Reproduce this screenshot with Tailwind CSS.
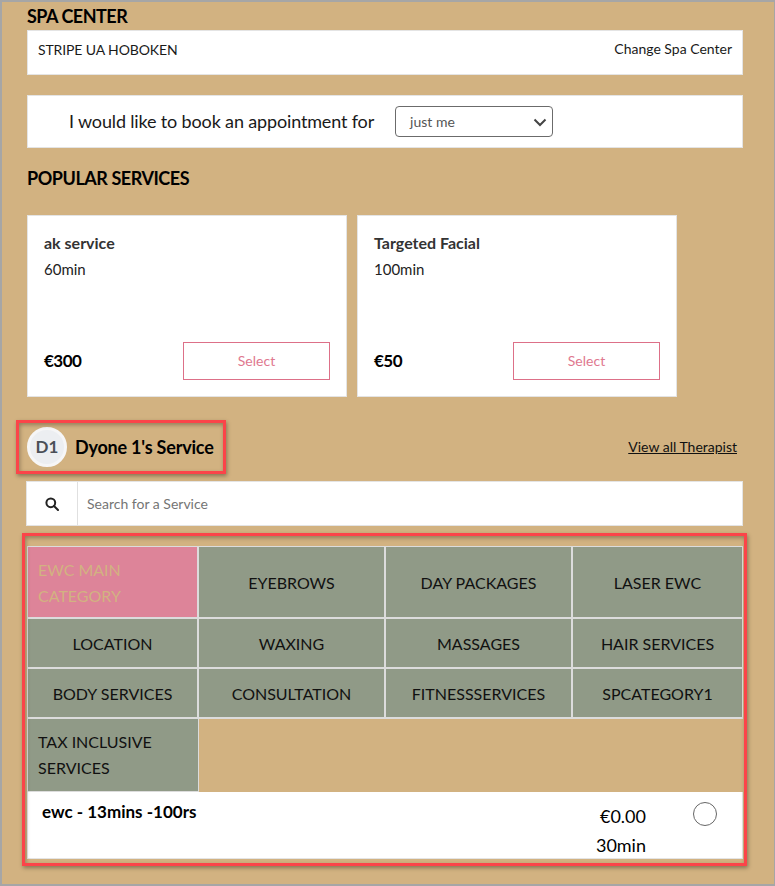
<!doctype html>
<html lang="en">
<head>
    <title>Book a Service</title>
    <meta charset="UTF-8">
    <meta name="viewport" content="width=device-width, initial-scale=1.0">
    <script src="https://cdn.jsdelivr.net/npm/@tailwindcss/browser@4"></script>
</head>
<body class="font-['Lato',sans-serif] text-black">
<main class="relative w-[775px] h-[886px] overflow-hidden bg-[#d2b281] border-t-2 border-b-2 border-l-2 border-r border-[#a6a6a6] pl-[25px]">

    <!-- Spa center -->
    <h2 class="h-[28px] pt-[4px] text-[18px] leading-[20px] font-bold tracking-[-0.5px]">SPA CENTER</h2>
    <div class="w-[716px] h-[45px] flex justify-between bg-white border border-[#e4e4e4] pl-[10px] pr-[10px] pt-[9px] text-[14px] leading-[18px] text-[#1a1a1a]">
        <span class="mt-px tracking-[-0.12px]">STRIPE UA HOBOKEN</span>
        <span>Change Spa Center</span>
    </div>

    <!-- Book for -->
    <div class="w-[716px] h-[53px] mt-[20px] flex items-center bg-white border border-[#e4e4e4] pl-[41px]">
        <span class="text-[18px] tracking-[-0.15px] text-[#1a1a1a]">I would like to book an appointment for</span>
        <div class="ml-[21px] w-[158px] h-[31px] flex items-center justify-between border border-[#6b6b6b] rounded-[4px] pl-[14px] pr-[5px] text-[14px] text-[#555]">
            <span>just me</span>
            <svg width="14" height="14" viewBox="0 0 14 14" fill="none" stroke="#444" stroke-width="2"><path d="M1.5 4.5 7 10l5.5-5.5"/></svg>
        </div>
    </div>

    <!-- Popular services -->
    <h2 class="mt-[20px] h-[20px] text-[18px] leading-[20px] font-bold tracking-[-0.45px]">POPULAR SERVICES</h2>
    <div class="mt-[27px] flex gap-[10px]">
        <div class="w-[320px] h-[182px] flex flex-col bg-white border border-[#e4e4e4] pl-[16px] pr-[16px] pt-[17px]">
            <div class="text-[16px] leading-[20px] font-bold text-[#333]">ak service</div>
            <div class="mt-[6px] text-[15px] leading-[20px] text-[#222]">60min</div>
            <div class="mt-auto mb-[16px] flex items-center justify-between">
                <span class="text-[17px] font-bold tracking-[-0.5px]">€300</span>
                <span class="w-[147px] h-[38px] pb-[2px] flex items-center justify-center border border-[#dd7088] text-[14px] text-[#e0788f]">Select</span>
            </div>
        </div>
        <div class="w-[320px] h-[182px] flex flex-col bg-white border border-[#e4e4e4] pl-[16px] pr-[16px] pt-[17px]">
            <div class="text-[16px] leading-[20px] font-bold text-[#333]">Targeted Facial</div>
            <div class="mt-[6px] text-[15px] leading-[20px] text-[#222]">100min</div>
            <div class="mt-auto mb-[16px] flex items-center justify-between">
                <span class="text-[17px] font-bold tracking-[-0.5px]">€50</span>
                <span class="w-[147px] h-[38px] pb-[2px] flex items-center justify-center border border-[#dd7088] text-[14px] text-[#e0788f]">Select</span>
            </div>
        </div>
    </div>

    <!-- Therapist header -->
    <div class="mt-[30px] w-[710px] h-[40px] flex items-center justify-between">
        <div class="flex items-center gap-[8px]">
            <div class="w-[40px] h-[40px] flex items-center justify-center rounded-full bg-[#eceef1] border-[3px] border-[#f6f6f7] text-[17px] font-bold text-[#4a4f57]">D1</div>
            <span class="text-[18px] font-bold tracking-[-0.2px]">Dyone 1's Service</span>
        </div>
        <a class="pb-[2px] text-[14px] underline text-[#111]">View all Therapist</a>
    </div>

    <!-- Search -->
    <div class="mt-[14px] -ml-px w-[717px] h-[45px] flex bg-white border border-[#e4e4e4]">
        <div class="w-[51px] flex items-center justify-center border-r border-[#e0e0e0]">
            <svg width="14" height="14" viewBox="0 0 14 14" fill="none" stroke="#222" stroke-width="2"><circle cx="5.8" cy="5.8" r="4.4"/><path d="M9 9l4 4" stroke-linecap="round"/></svg>
        </div>
        <div class="flex items-center pl-[9px] text-[14px] text-[#757575]">Search for a Service</div>
    </div>

    <!-- Categories -->
    <div class="mt-[20px] w-[716px] grid grid-cols-[172px_187px_187px_170px] grid-rows-[73px_50px_50px_73px] text-[16px] text-[#111]">
        <div class="flex items-center bg-[#dd8499] border border-r-2 border-b-2 border-[#dcdcdc] pt-[2px] pl-[10px] leading-[26px] text-[#d2b281]">EWC MAIN<br>CATEGORY</div>
        <div class="flex items-center justify-center bg-[#909a87] border-t border-r-2 border-b-2 border-[#dcdcdc] pt-[2px]">EYEBROWS</div>
        <div class="flex items-center justify-center bg-[#909a87] border-t border-r-2 border-b-2 border-[#dcdcdc] pt-[2px]">DAY PACKAGES</div>
        <div class="flex items-center justify-center bg-[#909a87] border-t border-r border-b-2 border-[#dcdcdc] pt-[2px]">LASER EWC</div>
        <div class="flex items-center justify-center bg-[#909a87] border-l border-r-2 border-b-2 border-[#dcdcdc] pt-[2px]">LOCATION</div>
        <div class="flex items-center justify-center bg-[#909a87] border-r-2 border-b-2 border-[#dcdcdc] pt-[2px]">WAXING</div>
        <div class="flex items-center justify-center bg-[#909a87] border-r-2 border-b-2 border-[#dcdcdc] pt-[2px]">MASSAGES</div>
        <div class="flex items-center justify-center bg-[#909a87] border-r border-b-2 border-[#dcdcdc] pt-[2px]">HAIR SERVICES</div>
        <div class="flex items-center justify-center bg-[#909a87] border-l border-r-2 border-b-2 border-[#dcdcdc] pt-[2px]">BODY SERVICES</div>
        <div class="flex items-center justify-center bg-[#909a87] border-r-2 border-b-2 border-[#dcdcdc] pt-[2px]">CONSULTATION</div>
        <div class="flex items-center justify-center bg-[#909a87] border-r-2 border-b-2 border-[#dcdcdc] pt-[2px]">FITNESSSERVICES</div>
        <div class="flex items-center justify-center bg-[#909a87] border-r border-b-2 border-[#dcdcdc] pt-[2px]">SPCATEGORY1</div>
        <div class="flex items-center bg-[#909a87] border-l border-r border-b border-[#dcdcdc] pl-[10px] leading-[26px]">TAX INCLUSIVE<br>SERVICES</div>
    </div>

    <!-- Service row -->
    <div class="w-[716px] h-[67px] flex bg-white border-l border-r border-b border-[#e4e4e4] pl-[14px]">
        <div class="pt-[9px] text-[17px] leading-[22px] font-bold">ewc - 13mins -100rs</div>
        <div class="ml-auto pt-[10px] w-[52px] text-right text-[18px] leading-[29px]">€0.00<br>30min</div>
        <div class="ml-[47px] mr-[25px] mt-[10px] w-[24px] h-[24px] rounded-full border border-[#666]"></div>
    </div>

    <!-- Red annotation boxes -->
    <div class="absolute left-[14px] top-[418px] w-[210px] h-[54px] border-[3px] border-[#fb4449] shadow-[1px_2px_4px_rgba(0,0,0,0.35),inset_1px_2px_4px_rgba(0,0,0,0.3)]"></div>
    <div class="absolute left-[20px] top-[531px] w-[725px] h-[333px] border-[3px] border-[#fb4449] shadow-[1px_2px_4px_rgba(0,0,0,0.35),inset_1px_2px_4px_rgba(0,0,0,0.3)]"></div>
</main>
</body>
</html>
